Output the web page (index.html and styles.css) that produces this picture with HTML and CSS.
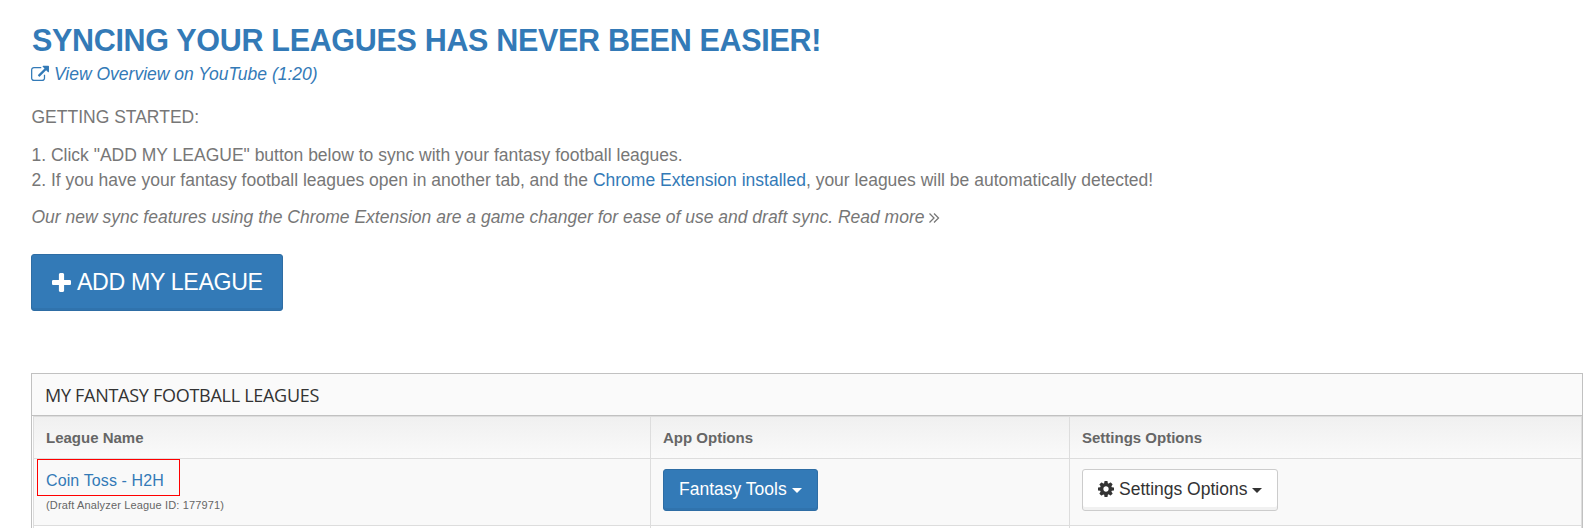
FILE: index.html
```html
<!DOCTYPE html>
<html lang="en">
<head>
  <meta charset="UTF-8" />
  <meta name="viewport" content="width=device-width, initial-scale=1.0" />
  <title>My Fantasy Football Leagues</title>
  <link rel="stylesheet" href="styles.css">
</head>
<body>
<main class="content">
  <h1>SYNCING YOUR LEAGUES HAS NEVER BEEN EASIER!</h1>
  <a href="#" class="video-link"><svg class="icon icon-external" viewBox="0 0 1792 1536"><path d="M1408 800v320q0 119-84.500 203.500t-203.500 84.500h-832q-119 0-203.500-84.500t-84.500-203.500v-832q0-119 84.500-203.500t203.500-84.500h704q14 0 23 9t9 23v64q0 14-9 23t-23 9h-704q-66 0-113 47t-47 113v832q0 66 47 113t113 47h832q66 0 113-47t47-113v-320q0-14 9-23t23-9h64q14 0 23 9t9 23zm384-864v512q0 26-19 45t-45 19-45-19l-176-176-652 652q-10 10-23 10t-23-10l-114-114q-10-10-10-23t10-23l652-652-176-176q-19-19-19-45t19-45 45-19h512q26 0 45 19t19 45z"/></svg><span>View Overview on YouTube (1:20)</span></a>

  <div class="intro">
    <p>GETTING STARTED:</p>
    <p>1. Click "ADD MY LEAGUE" button below to sync with your fantasy football leagues.<br>
    2. If you have your fantasy football leagues open in another tab, and the <a href="#">Chrome Extension installed</a>, your leagues will be automatically detected!</p>
    <p><em>Our new sync features using the Chrome Extension are a game changer for ease of use and draft sync. Read more</em> <svg class="icon icon-more" viewBox="0 0 10 10"><path d="M.5.500l4.500 4.500-4.500 4.500M5 .5l4.500 4.500-4.500 4.500"/></svg></p>
  </div>

  <a href="#" class="btn btn-primary btn-add"><svg class="icon icon-plus" viewBox="192 128 1408 1408"><path d="M1600 736v192q0 40-28 68t-68 28h-416v416q0 40-28 68t-68 28h-192q-40 0-68-28t-28-68v-416h-416q-40 0-68-28t-28-68v-192q0-40 28-68t68-28h416v-416q0-40 28-68t68-28h192q40 0 68 28t28 68v416h416q40 0 68 28t28 68z"/></svg><span>ADD MY LEAGUE</span></a>

  <section class="widget">
    <header class="widget-header">MY FANTASY FOOTBALL LEAGUES</header>
    <table class="leagues">
      <thead>
        <tr>
          <th class="col-name">League Name</th>
          <th class="col-app">App Options</th>
          <th>Settings Options</th>
        </tr>
      </thead>
      <tbody>
        <tr>
          <td>
            <a href="#" class="league-name">Coin Toss - H2H</a>
            <small>(Draft Analyzer League ID: 177971)</small>
          </td>
          <td><button class="btn btn-primary">Fantasy Tools<i class="caret"></i></button></td>
          <td><button class="btn btn-default"><svg class="icon icon-cog" viewBox="128 128 1536 1536"><path d="M1152 896q0-106-75-181t-181-75-181 75-75 181 75 181 181 75 181-75 75-181zm512-109v222q0 12-8 23t-20 13l-185 28q-19 54-39 91 35 50 107 138 10 12 10 25t-9 23q-27 37-99 108t-94 71q-12 0-26-9l-138-108q-44 23-91 38-16 136-29 186-7 28-36 28h-222q-14 0-24.500-8.500t-11.500-21.500l-28-184q-49-16-90-37l-141 107q-10 9-25 9-14 0-25-11-126-114-165-168-7-10-7-23 0-12 8-23 15-21 51-66.500t54-70.500q-27-50-41-99l-183-27q-13-2-21-12.500t-8-23.500v-222q0-12 8-23t19-13l186-28q14-46 39-92-40-57-107-138-10-12-10-24 0-10 9-23 26-36 98.500-107.500t94.500-71.500q13 0 26 10l138 107q44-23 91-38 16-136 29-186 7-28 36-28h222q14 0 24.500 8.500t11.500 21.500l28 184q49 16 90 37l142-107q9-9 24-9 13 0 25 10 129 119 165 170 7 8 7 22 0 12-8 23-15 21-51 66.500t-54 70.500q26 50 41 98l183 28q13 2 21 12.500t8 23.500z"/></svg>Settings Options<i class="caret"></i></button></td>
        </tr>
        <tr class="row-empty"><td></td><td></td><td></td></tr>
      </tbody>
    </table>
  </section>
</main>
</body>
</html>
```
FILE: styles.css
```css
* { box-sizing: border-box; }
body {
  margin: 0;
  font-family: "Liberation Sans", Arial, sans-serif;
  font-size: 17.5px; line-height: 25px;
  color: #777; background: #fff;
}
a { color: #337ab7; text-decoration: none; }
.content { padding: 22px 0 0 31px; }
h1 { margin: 0; padding-left: 1px; font-size: 30.5px; line-height: 36px; letter-spacing: -.32px; color: #337ab7; }
.icon { fill: currentColor; overflow: visible; flex: none; }

/* Intro */
.video-link { display: flex; align-items: center; gap: 5px; margin-top: 4px; font-style: italic; }
.icon-external { width: 18px; height: 15.4px; }
.intro { padding: 18px 0 0 .5px; }
.intro p { margin: 0 0 12.5px; }
.icon-more {
  width: 10px; height: 10px;
  fill: none; stroke: currentColor; stroke-width: 1.3;
}

/* Buttons */
.btn {
  display: inline-flex; align-items: center;
  height: 42px; padding: 0 15px 2px;
  border: 1px solid; border-radius: 3px;
  font: 17.5px/24px "Liberation Sans", Arial, sans-serif;
  white-space: nowrap;
}
.btn-primary { background: #337ab7; border-color: #2e6da4; color: #fff; box-shadow: inset 0 -2px 0 rgba(0,0,0,.05); }
.btn-default { background: #fff; border-color: #ccc; color: #333; box-shadow: inset 0 -3px 0 #f1f1f1; }
.btn-add {
  width: 252px; height: 57px; margin-top: 11px; padding: 0 20px; gap: 6px;
  font-size: 23.2px; letter-spacing: -.35px;
}
.icon-plus { width: 19px; height: 19px; }
.icon-cog { width: 16px; height: 16px; margin-right: 5px; }
.caret {
  margin: 3px 0 0 5px;
  border-top: 5px solid; border-left: 5px solid transparent; border-right: 5px solid transparent;
}

/* Leagues table */
.widget { margin-top: 62px; border: 1px solid #c1c1c1; border-bottom: 0; }
.widget-header {
  height: 42px; padding-left: 13px;
  border-bottom: 1px solid #c1c1c1; background: #fafafa;
  font: 18px/42px "Open Sans", sans-serif; letter-spacing: -.28px; color: #333;
}
.leagues {
  width: calc(100% - 1px); margin-left: 1px;
  table-layout: fixed; border-collapse: separate; border-spacing: 0;
  border: 1px solid #ddd; border-bottom: 0;
}
.leagues th, .leagues td { padding: 0 12px; text-align: left; border-bottom: 1px solid #ddd; border-left: 1px solid #ddd; }
.leagues th:first-child, .leagues td:first-child { border-left: 0; }
.leagues thead tr { background: linear-gradient(#f0f0f0, #fafafa); }
.leagues th { height: 42px; padding-top: 2px; font-size: 15px; line-height: 20px; color: #666; }
.leagues td { height: 67px; background: #f9f9f9; vertical-align: top; padding-top: 10px; }
.leagues .row-empty td { height: 2px; padding: 0; border-bottom: 0; background: #fff; }
.col-name { width: 616px; }
.col-app { width: 419px; }
.league-name {
  display: block; width: 143px; height: 37px;
  margin: -10px 0 0 -9px; padding-left: 8px;
  border: 1px solid #f00;
  font-size: 16px; line-height: 41px; letter-spacing: .12px;
}
.leagues small { display: block; font-size: 11px; line-height: 18px; letter-spacing: .15px; color: #666; }
```
